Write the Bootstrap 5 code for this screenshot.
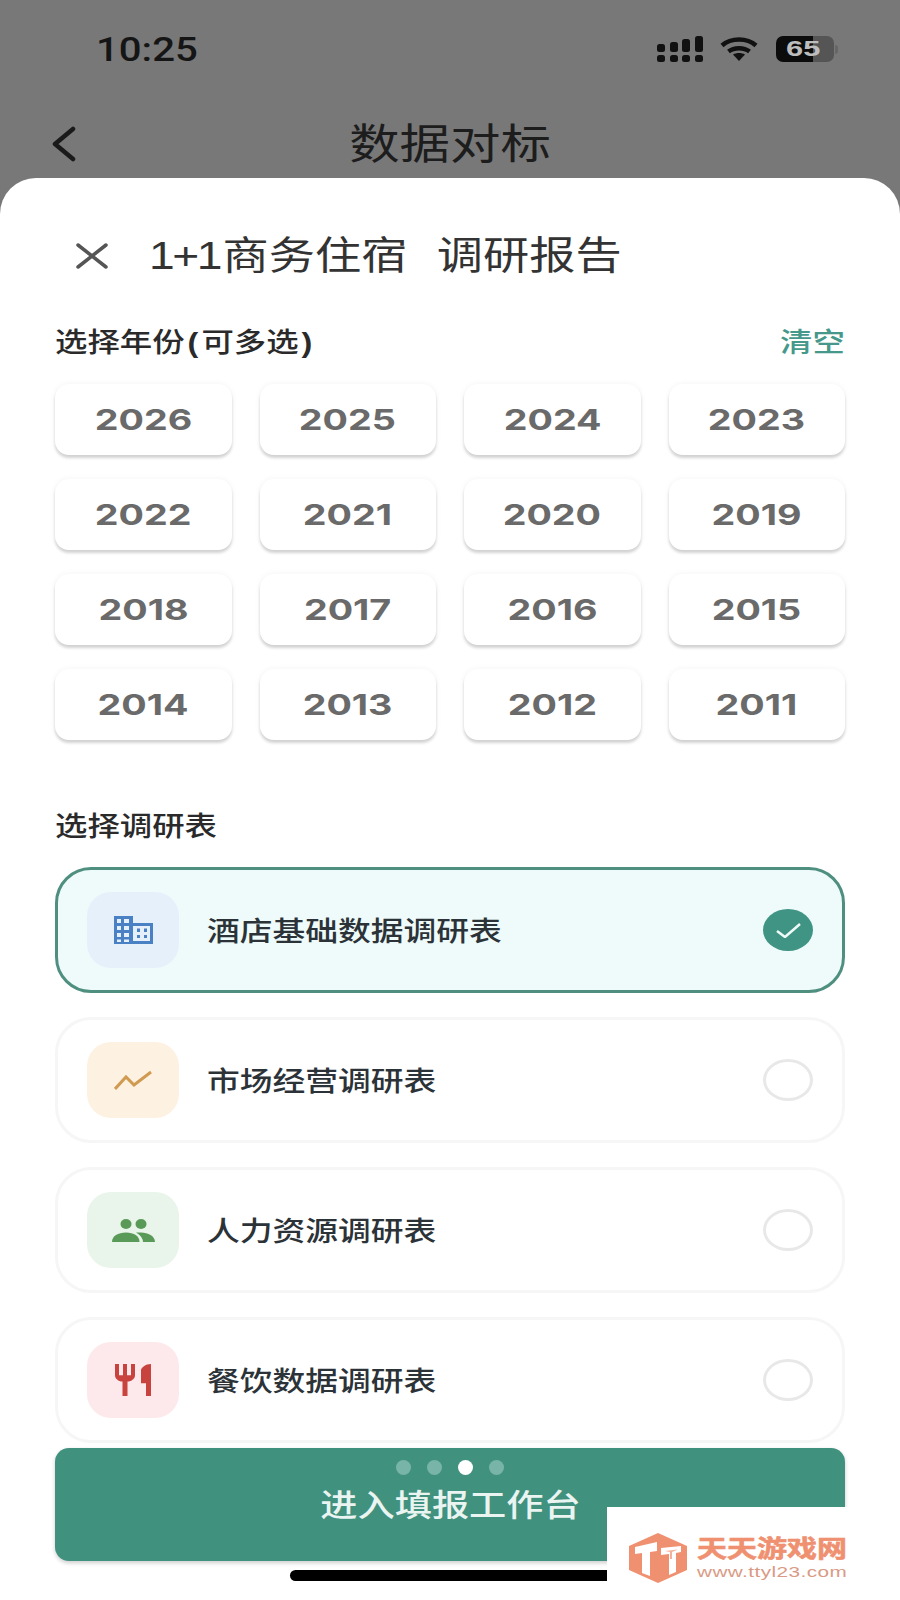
<!DOCTYPE html>
<html lang="zh-CN">

<head>
    <meta charset="UTF-8">
    <meta name="viewport" content="width=device-width, initial-scale=1.0">
    <title>数据对标</title>
    <link href="https://cdn.jsdelivr.net/npm/bootstrap@5.3.0/dist/css/bootstrap.min.css" rel="stylesheet">
    <style>
        body {
            margin: 0;
            background-color: #fff;
            font-family: "Liberation Sans", "Noto Sans CJK SC", sans-serif;
        }

        .phone {
            width: 900px;
            height: 1600px;
            overflow: hidden;
            background-color: #787878;
        }

        /* the whole screenshot is stretched sideways, so the text is too */
        .wide {
            display: inline-block;
            white-space: nowrap;
            transform: scaleX(1.2);
            transform-origin: left center;
        }

        .wide-c {
            transform-origin: center center;
        }

        .top-area {
            height: 178px;
        }

        .status-row {
            padding: 36px 62px 0 96px;
            height: 62px;
        }

        .clock {
            font-family: Roboto, sans-serif;
            font-weight: 500;
            font-size: 34px;
            line-height: 26px;
            color: #151515;
            transform: scaleX(1.18);
        }

        .battery {
            width: 58px;
            height: 26px;
            border-radius: 7px;
            background: linear-gradient(90deg, #0c0c0c 63%, #555 64%);
            font-size: 22px;
            font-weight: 700;
            line-height: 26px;
            color: #bdbdbd;
            padding-left: 10px;
        }

        .battery .wide {
            transform: scaleX(1.4);
        }

        .battery-cap {
            width: 3px;
            height: 9px;
            margin-left: 1px;
            border-radius: 0 3px 3px 0;
            background-color: #666;
        }

        .wifi-icon {
            margin: 0 18px 0 17px;
        }

        .nav-row {
            display: grid;
            grid-template-columns: 1fr auto 1fr;
            align-items: center;
            margin-top: 58px;
            padding: 0 52px;
            height: 40px;
        }

        .nav-back {
            margin-top: 6px;
        }

        .nav-title {
            font-family: "Noto Sans CJK SC", sans-serif;
            font-size: 42px;
            line-height: 40px;
            color: #1d1d1d;
        }

        .sheet {
            height: 1422px;
            background-color: #fff;
            border-radius: 36px 36px 0 0;
            padding: 60px 55px 0 55px;
        }

        .sheet-head {
            height: 35px;
            padding-left: 21px;
            gap: 41px;
        }

        .sheet-title {
            font-size: 38.5px;
            line-height: 35px;
            color: #333;
        }

        .title-num {
            letter-spacing: -2px;
            margin-right: 2px;
        }

        .title-gap {
            margin-left: 24.500px;
        }

        .label-row {
            margin-top: 56px;
            height: 28px;
        }

        .label-txt {
            font-size: 27px;
            line-height: 28px;
            font-weight: 500;
            color: #2a2a2a;
        }

        .paren {
            margin: 0 2.500px;
            font-weight: 700;
        }

        .clear-txt {
            font-size: 27px;
            line-height: 28px;
            font-weight: 500;
            color: #45988a;
            margin-right: 11px;
        }

        .year-grid {
            display: grid;
            grid-template-columns: repeat(4, 1fr);
            column-gap: 28px;
            row-gap: 24px;
            margin-top: 27px;
        }

        .year-btn {
            height: 71px;
            padding: 0;
            border: 0;
            border-radius: 14px;
            background-color: #fff;
            box-shadow: 0 3px 3px rgba(0, 0, 0, .16), 0 0 6px rgba(0, 0, 0, .05);
            font-family: Inter, "Liberation Sans", sans-serif;
            font-size: 29px;
            font-weight: 700;
            line-height: 71px;
            color: #6a6a6a;
        }

        .year-btn .wide {
            transform: scaleX(1.3);
        }

        .label-survey {
            margin-top: 73px;
        }

        .survey-list {
            margin-top: 26px;
            gap: 24px;
        }

        .survey-item {
            height: 126px;
            padding: 0 29px 0 29px;
            border: 3px solid #f6f6f6;
            border-radius: 36px;
            background-color: #fff;
        }

        .survey-item.picked {
            border-color: #4f8f80;
            background-color: #eefbfa;
        }

        .survey-icon {
            width: 92px;
            height: 76px;
            border-radius: 24px;
            flex-shrink: 0;
        }

        .tone-blue { background-color: #e6f0fb; }
        .tone-amber { background-color: #fdf2e2; }
        .tone-green { background-color: #e9f4ea; }
        .tone-red { background-color: #fde9ec; }

        .survey-name {
            margin-left: 28px;
            padding-top: 4px;
            font-size: 27.300px;
            line-height: 30px;
            font-weight: 500;
            color: #2c3338;
        }

        .tick {
            width: 50px;
            height: 42px;
            border-radius: 50%;
            border: 3px solid #e8e8e8;
            flex-shrink: 0;
        }

        .tick.on {
            border: 0;
            background-color: #3f9484;
        }

        .enter-btn {
            width: 100%;
            height: 113px;
            margin-top: 5px;
            padding: 0;
            border: 0;
            border-radius: 14px;
            background-color: #41917f;
            box-shadow: 0 2px 4px rgba(0, 0, 0, .2);
            font-size: 31px;
            font-weight: 500;
            line-height: 116px;
            color: #eaf4f1;
        }

        .pager {
            top: 12px;
            gap: 16px;
        }

        .pager-dot {
            width: 15px;
            height: 15px;
            border-radius: 50%;
            background-color: #78b5a8;
        }

        .pager-dot.now {
            background-color: #fff;
        }

        .home-bar {
            left: 290px;
            top: 1570px;
            width: 330px;
            height: 11px;
            border-radius: 6px;
            background-color: #000;
        }

        .stamp {
            left: 607px;
            top: 1507px;
            width: 293px;
            height: 93px;
            background-color: #fff;
        }

        .stamp-logo {
            left: 22px;
            top: 26px;
        }

        .stamp-name {
            left: 90px;
            top: 29px;
            font-size: 24px;
            line-height: 26px;
            font-weight: 700;
            color: #ef9070;
            -webkit-text-stroke: .6px #ef9070;
            transform: scaleX(1.25);
        }

        .stamp-url {
            left: 90px;
            top: 57px;
            font-size: 14px;
            line-height: 16px;
            letter-spacing: .3px;
            color: #d99a85;
            transform: scaleX(1.48);
        }
    </style>
</head>

<body>
    <div class="phone position-relative">
        <div class="top-area">
            <div class="status-row d-flex justify-content-between align-items-center">
                <span class="clock wide">10:25</span>
                <div class="d-flex align-items-center">
                    <svg width="46" height="26" viewBox="0 0 46 26" fill="#111">
                        <rect x="0" y="8" width="8" height="8" rx="2.500" />
                        <rect x="0" y="19" width="8" height="7" rx="2.500" />
                        <rect x="13" y="6" width="8" height="10" rx="2.500" />
                        <rect x="13" y="19" width="8" height="7" rx="2.500" />
                        <rect x="25" y="3" width="8" height="13" rx="2.500" />
                        <rect x="25" y="19" width="8" height="7" rx="2.500" />
                        <rect x="38" y="0" width="8" height="16" rx="2.500" />
                        <rect x="38" y="19" width="8" height="7" rx="2.500" />
                    </svg>
                    <svg class="wifi-icon" width="38" height="24" viewBox="0 0 38 24" fill="none" stroke="#111" stroke-width="4.500">
                        <path d="M2 8.500C11 0.500 27 0.500 36 8.500" />
                        <path d="M8.500 14.500C14 10 24 10 29.500 14.500" />
                        <path d="M13 17.500C16.500 15.500 21.500 15.500 25 17.500L19 24Z" fill="#111" stroke="none" />
                    </svg>
                    <div class="d-flex align-items-center">
                        <div class="battery"><span class="wide">65</span></div>
                        <div class="battery-cap"></div>
                    </div>
                </div>
            </div>
            <div class="nav-row">
                <svg class="nav-back" width="24" height="36" viewBox="0 0 24 36" fill="none" stroke="#1a1a1a" stroke-width="4.500" stroke-linecap="round" stroke-linejoin="round">
                    <path d="M21 3L3 18 21 33" />
                </svg>
                <span class="nav-title wide wide-c">数据对标</span>
                <span></span>
            </div>
        </div>

        <div class="sheet">
            <div class="sheet-head d-flex align-items-center">
                <svg width="32" height="26" viewBox="0 0 32 26" fill="none" stroke="#555" stroke-width="3.500" stroke-linecap="round">
                    <path d="M2 2L30 24M30 2L2 24" />
                </svg>
                <span class="sheet-title wide"><span class="title-num">1+1</span>商务住宿<span class="title-gap">调研报告</span></span>
            </div>

            <div class="label-row d-flex justify-content-between">
                <span class="label-txt wide">选择年份<span class="paren">(</span>可多选<span class="paren">)</span></span>
                <span class="clear-txt wide">清空</span>
            </div>

            <div class="year-grid">
                <button class="btn year-btn"><span class="wide wide-c">2026</span></button>
                <button class="btn year-btn"><span class="wide wide-c">2025</span></button>
                <button class="btn year-btn"><span class="wide wide-c">2024</span></button>
                <button class="btn year-btn"><span class="wide wide-c">2023</span></button>
                <button class="btn year-btn"><span class="wide wide-c">2022</span></button>
                <button class="btn year-btn"><span class="wide wide-c">2021</span></button>
                <button class="btn year-btn"><span class="wide wide-c">2020</span></button>
                <button class="btn year-btn"><span class="wide wide-c">2019</span></button>
                <button class="btn year-btn"><span class="wide wide-c">2018</span></button>
                <button class="btn year-btn"><span class="wide wide-c">2017</span></button>
                <button class="btn year-btn"><span class="wide wide-c">2016</span></button>
                <button class="btn year-btn"><span class="wide wide-c">2015</span></button>
                <button class="btn year-btn"><span class="wide wide-c">2014</span></button>
                <button class="btn year-btn"><span class="wide wide-c">2013</span></button>
                <button class="btn year-btn"><span class="wide wide-c">2012</span></button>
                <button class="btn year-btn"><span class="wide wide-c">2011</span></button>
            </div>

            <div class="label-row label-survey">
                <span class="label-txt wide">选择调研表</span>
            </div>

            <div class="survey-list d-flex flex-column">
                <div class="survey-item picked d-flex align-items-center">
                    <div class="survey-icon tone-blue d-flex align-items-center justify-content-center">
                        <svg width="39" height="28" viewBox="0 0 39 28">
                            <path fill="#4a80c4" fill-rule="evenodd" d="M0 0H19V7H39V28H0ZM3 3V7H7V3ZM10 3V7H15V3ZM3 10V14H7V10ZM10 10V14H15V10ZM3 17V21H7V17ZM10 17V21H15V17ZM3 23.500V26H7V23.500ZM10 23.500V26H15V23.500ZM19 10V25H36V10ZM23 12.500H26V16H23ZM30 12.500H33V16H30ZM23 19H26V22H23ZM30 19H33V22H30Z" />
                        </svg>
                    </div>
                    <span class="survey-name wide">酒店基础数据调研表</span>
                    <div class="tick on ms-auto d-flex align-items-center justify-content-center">
                        <svg width="25" height="15" viewBox="0 0 25 15" fill="none" stroke="#f1faf8" stroke-width="2.500">
                            <path d="M1 8L9 14 24 1" />
                        </svg>
                    </div>
                </div>
                <div class="survey-item d-flex align-items-center">
                    <div class="survey-icon tone-amber d-flex align-items-center justify-content-center">
                        <svg width="38" height="20" viewBox="0 0 38 20" fill="none" stroke="#d09a50" stroke-width="3">
                            <path d="M1 19L12 7 20 15 37 2" />
                        </svg>
                    </div>
                    <span class="survey-name wide">市场经营调研表</span>
                    <div class="tick ms-auto"></div>
                </div>
                <div class="survey-item d-flex align-items-center">
                    <div class="survey-icon tone-green d-flex align-items-center justify-content-center">
                        <svg width="43" height="23" viewBox="0 0 43 23" fill="#5a9a58">
                            <ellipse cx="14" cy="5" rx="5.500" ry="5" />
                            <ellipse cx="29" cy="5" rx="5.500" ry="5" />
                            <path d="M0 23C0 17 6 13.500 14 13.500S27.500 17 27.500 23Z" />
                            <path d="M24 13.500C26 13.500 27 13.500 29 13.500 36 13.500 43 17 43 23H31C31 19 28 16 24 13.500Z" />
                        </svg>
                    </div>
                    <span class="survey-name wide">人力资源调研表</span>
                    <div class="tick ms-auto"></div>
                </div>
                <div class="survey-item d-flex align-items-center">
                    <div class="survey-icon tone-red d-flex align-items-center justify-content-center">
                        <svg width="36" height="32" viewBox="3 2 18 20" preserveAspectRatio="none" fill="#c8433d">
                            <path d="M11 9H9V2H7v7H5V2H3v7c0 2.120 1.660 3.840 3.750 3.970V22h2.500v-9.030C11.340 12.840 13 11.120 13 9V2h-2v7zm5-3v8h2.500v8H21V2c-2.760 0-5 2.240-5 4z" />
                        </svg>
                    </div>
                    <span class="survey-name wide">餐饮数据调研表</span>
                    <div class="tick ms-auto"></div>
                </div>
            </div>

            <button class="btn enter-btn position-relative">
                <span class="wide wide-c">进入填报工作台</span>
                <span class="pager position-absolute start-50 translate-middle-x d-flex">
                    <span class="pager-dot"></span>
                    <span class="pager-dot"></span>
                    <span class="pager-dot now"></span>
                    <span class="pager-dot"></span>
                </span>
            </button>
        </div>

        <div class="home-bar position-absolute"></div>

        <div class="stamp position-absolute">
            <svg class="stamp-logo position-absolute" width="58" height="50" viewBox="0 0 58 50">
                <path fill="#ef9070" d="M29 0L58 13V37L29 50 0 37V13Z" />
                <path fill="#fff" d="M6 14L28 9V18L21 19V43L13 40V20L6 21Z" />
                <path fill="#fff" d="M32 15L52 13V19L47 20V39L40 42V21L32 22Z" />
                <path fill="#ef9070" d="M36 18L49 16.500 43 19V26H41V19Z" opacity=".7" />
            </svg>
            <span class="stamp-name wide position-absolute">天天游戏网</span>
            <span class="stamp-url wide position-absolute">www.ttyl23.com</span>
        </div>
    </div>

    <script src="https://cdn.jsdelivr.net/npm/bootstrap@5.3.0/dist/js/bootstrap.bundle.min.js"></script>
</body>

</html>
